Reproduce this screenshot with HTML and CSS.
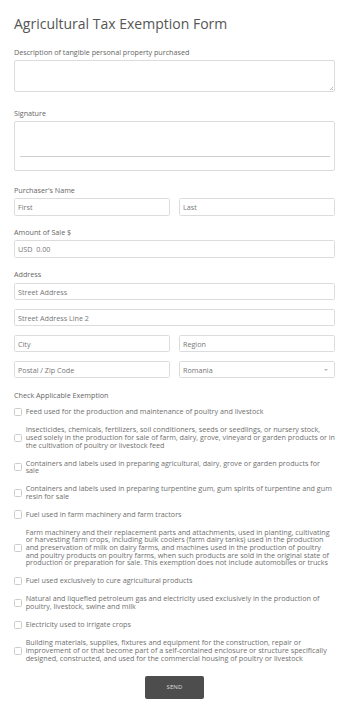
FILE: index.html
```html
<!DOCTYPE html>
<html lang="en">
<head>
<meta charset="utf-8">
<title>Agricultural Tax Exemption Form</title>
<link rel="stylesheet" href="styles.css">
</head>
<body>
<form class="form">
  <h1 class="title">Agricultural Tax Exemption Form</h1>

  <div class="field field-desc">
    <label class="label">Description of tangible personal property purchased</label>
    <div class="textarea"><span class="grip"></span></div>
  </div>

  <div class="field field-sig">
    <label class="label">Signature</label>
    <div class="signature"><span class="sig-line"></span></div>
  </div>

  <div class="field">
    <label class="label">Purchaser's Name</label>
    <div class="row">
      <div class="input">First</div>
      <div class="input">Last</div>
    </div>
  </div>

  <div class="field">
    <label class="label">Amount of Sale $</label>
    <div class="input">USD&nbsp; 0.00</div>
  </div>

  <div class="field">
    <label class="label">Address</label>
    <div class="stack">
      <div class="input">Street Address</div>
      <div class="input">Street Address Line 2</div>
      <div class="row">
        <div class="input">City</div>
        <div class="input">Region</div>
      </div>
      <div class="row">
        <div class="input">Postal / Zip Code</div>
        <div class="input select">Romania<span class="caret"></span></div>
      </div>
    </div>
  </div>

  <div class="field field-checks">
    <label class="label">Check Applicable Exemption</label>
    <ul class="checks">
      <li class="check"><span class="box"></span><span class="check-text">Feed used for the production and maintenance of poultry and livestock</span></li>
      <li class="check"><span class="box"></span><span class="check-text">Insecticides, chemicals, fertilizers, soil conditioners, seeds or seedlings, or nursery stock, used solely in the production for sale of farm, dairy, grove, vineyard or garden products or in the cultivation of poultry or livestock feed</span></li>
      <li class="check"><span class="box"></span><span class="check-text">Containers and labels used in preparing agricultural, dairy, grove or garden products for sale</span></li>
      <li class="check"><span class="box"></span><span class="check-text">Containers and labels used in preparing turpentine gum, gum spirits of turpentine and gum resin for sale</span></li>
      <li class="check"><span class="box"></span><span class="check-text">Fuel used in farm machinery and farm tractors</span></li>
      <li class="check"><span class="box"></span><span class="check-text">Farm machinery and their replacement parts and attachments, used in planting, cultivating or harvesting farm crops, including bulk coolers (farm dairy tanks) used in the production and preservation of milk on dairy farms, and machines used in the production of poultry and poultry products on poultry farms, when such products are sold in the original state of production or preparation for sale. This exemption does not include automobiles or trucks</span></li>
      <li class="check"><span class="box"></span><span class="check-text">Fuel used exclusively to cure agricultural products</span></li>
      <li class="check"><span class="box"></span><span class="check-text">Natural and liquefied petroleum gas and electricity used exclusively in the production of poultry, livestock, swine and milk</span></li>
      <li class="check"><span class="box"></span><span class="check-text">Electricity used to irrigate crops</span></li>
      <li class="check"><span class="box"></span><span class="check-text">Building materials, supplies, fixtures and equipment for the construction, repair or improvement of or that become part of a self-contained enclosure or structure specifically designed, constructed, and used for the commercial housing of poultry or livestock</span></li>
    </ul>
  </div>

  <div class="actions">
    <button type="button" class="send">SEND</button>
  </div>
</form>
</body>
</html>
```

FILE: styles.css
```css
html, body {
  margin: 0;
  padding: 0;
  background: #ffffff;
}

body {
  font-family: "Open Sans", "Liberation Sans", sans-serif;
  color: #666666;
}

.form {
  width: 321px;
  padding: 14px 15px 20px 14px;
  display: flex;
  flex-direction: column;
}

.title {
  margin: 0 0 13px 0;
  font-size: 14px;
  font-weight: 400;
  line-height: 20px;
  color: #555555;
}

.field {
  display: flex;
  flex-direction: column;
  margin-bottom: 11.5px;
}

.field-desc { margin-bottom: 15.7px; }
.field-sig { margin-bottom: 14px; }
.field-checks { margin-bottom: 13.8px; }

.label {
  display: block;
  font-size: 7.2px;
  line-height: 10px;
  color: #666666;
  margin-bottom: 3.3px;
}

.textarea {
  position: relative;
  height: 32px;
  border: 0.7px solid #dcdcdc;
  border-radius: 2px;
  box-sizing: border-box;
}

.grip {
  position: absolute;
  right: 1px;
  bottom: 1px;
  width: 3px;
  height: 3px;
  background: linear-gradient(135deg, transparent 45%, #b8b8b8 46%, #b8b8b8 58%, transparent 59%, transparent 70%, #b8b8b8 71%);
}

.signature {
  height: 49.6px;
  border: 0.7px solid #dcdcdc;
  border-radius: 2px;
  box-sizing: border-box;
  display: flex;
  flex-direction: column;
  justify-content: flex-end;
  padding: 0 4px 12.6px 4.7px;
}

.sig-line {
  display: block;
  height: 1.5px;
  background: #cfcfcf;
}

.row {
  display: grid;
  grid-template-columns: 1fr 1fr;
  column-gap: 9px;
}

.stack {
  display: flex;
  flex-direction: column;
  gap: 8.7px;
}

.input {
  position: relative;
  height: 17.4px;
  box-sizing: border-box;
  border: 0.7px solid #dcdcdc;
  border-radius: 1.5px;
  padding: 0 3px;
  font-size: 7.2px;
  line-height: 16px;
  color: #777777;
  white-space: nowrap;
}

.caret {
  position: absolute;
  right: 6px;
  top: 7.4px;
  width: 0;
  height: 0;
  border-left: 2px solid transparent;
  border-right: 2px solid transparent;
  border-top: 2px solid #b5b5b5;
}

.checks {
  list-style: none;
  margin: 5.2px 0 0 0;
  padding: 0;
  display: flex;
  flex-direction: column;
  gap: 10px;
}

.check {
  display: flex;
  align-items: center;
  gap: 3.4px;
}

.box {
  flex: 0 0 auto;
  width: 8.3px;
  height: 8.3px;
  box-sizing: border-box;
  border: 0.7px solid #cccccc;
  border-radius: 1.5px;
  background: #ffffff;
}

.check-text {
  font-size: 7.2px;
  line-height: 7.7px;
  color: #6f6f6f;
}

.actions {
  display: flex;
  justify-content: center;
}

.send {
  width: 59px;
  height: 22.7px;
  border: none;
  border-radius: 2px;
  background: #4d4d4d;
  color: #dddddd;
  font-family: "Open Sans", "Liberation Sans", sans-serif;
  font-size: 6px;
  letter-spacing: 0.1px;
  padding: 0;
  cursor: pointer;
}
```
